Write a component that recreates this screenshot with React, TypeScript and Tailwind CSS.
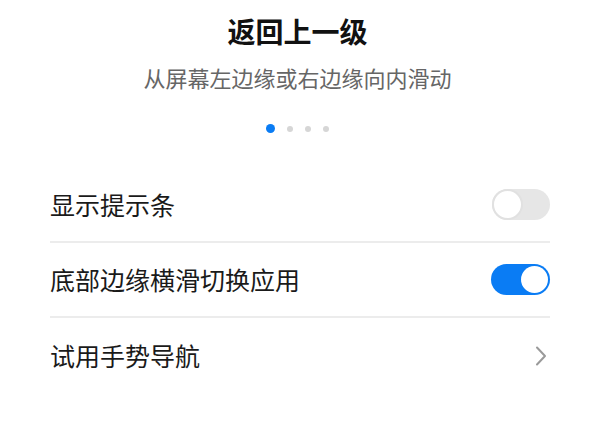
const Toggle = ({ on }: { on: boolean }) => {
  return (
    <div
      className={
        on
          ? 'w-[59px] h-[31px] rounded-full bg-[#0a7cf4] p-[2px] flex justify-end'
          : 'w-[58px] h-[31px] rounded-full bg-[#e6e6e6] flex justify-start'
      }
    >
      <div
        className={
          on
            ? 'w-[27px] h-[27px] rounded-full bg-white'
            : 'w-[31px] h-[31px] rounded-full bg-white border-2 border-[#e1e1e1]'
        }
      />
    </div>
  );
};

const Chevron = () => (
  <svg width="12" height="20" viewBox="0 0 12 20" fill="none" className="mr-[3px]">
    <path d="M2 1.5 L10 10 L2 18.5" stroke="#9a9a9a" strokeWidth="2" strokeLinecap="round" strokeLinejoin="round" />
  </svg>
);

const rows = [
  { label: '显示提示条', kind: 'off' },
  { label: '底部边缘横滑切换应用', kind: 'on' },
  { label: '试用手势导航', kind: 'link' },
];

export default function App() {
  return (
    <div
      className="w-[595px] h-[441px] bg-white flex flex-col items-center overflow-hidden"
      style={{ fontFamily: '"Noto Sans CJK SC", "Noto Sans", sans-serif' }}
    >
      <h1 className="pt-[17px] text-[28px] leading-none font-bold text-[#111]">返回上一级</h1>
      <p className="mt-[21px] text-[22px] leading-none text-[#666]">从屏幕左边缘或右边缘向内滑动</p>

      <div className="mt-[36px] flex items-center gap-[12px]">
        <span className="w-[9px] h-[9px] rounded-full bg-[#0a7cf4]" />
        <span className="w-[6px] h-[6px] rounded-full bg-[#d6d6d6]" />
        <span className="w-[6px] h-[6px] rounded-full bg-[#d6d6d6]" />
        <span className="w-[6px] h-[6px] rounded-full bg-[#d6d6d6]" />
      </div>

      <ul className="mt-[35px] w-full pl-[50px] pr-[45px]">
        {rows.map((r, i) => (
          <li
            key={r.label}
            className={
              'h-[75px] flex items-center justify-between ' +
              (i < rows.length - 1 ? 'border-b-2 border-[#ececec]' : '')
            }
          >
            <span className="text-[25px] leading-none text-[#1a1a1a]">{r.label}</span>
            {r.kind === 'link' ? <Chevron /> : <Toggle on={r.kind === 'on'} />}
          </li>
        ))}
      </ul>
    </div>
  );
}
